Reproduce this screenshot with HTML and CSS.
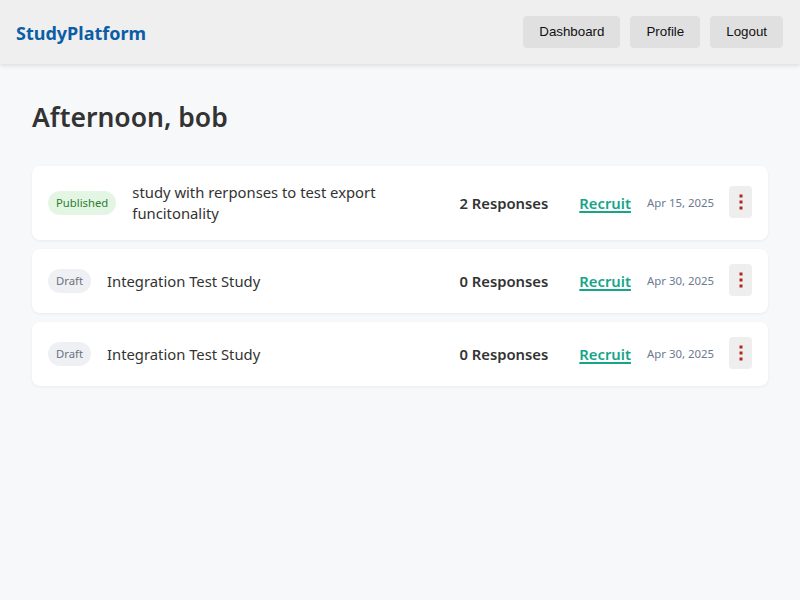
FILE: index.html
```html
<!DOCTYPE html>
<html lang="en">
<head>
<meta charset="utf-8">
<title>StudyPlatform</title>
<link rel="stylesheet" href="styles.css">
</head>
<body>
<header class="topbar">
  <div class="brand">StudyPlatform</div>
  <nav class="nav">
    <button class="nav-btn">Dashboard</button>
    <button class="nav-btn">Profile</button>
    <button class="nav-btn">Logout</button>
  </nav>
</header>
<main class="content">
  <h1 class="greeting">Afternoon, bob</h1>
  <div class="study-list">
    <div class="study-card">
      <span class="badge badge-published">Published</span>
      <div class="study-title">study with rerponses to test export funcitonality</div>
      <div class="responses">2 Responses</div>
      <a class="recruit" href="#">Recruit</a>
      <span class="date">Apr 15, 2025</span>
      <button class="menu-btn" aria-label="More"><svg width="4" height="16" viewBox="0 0 4 16"><rect x="0.5" y="0.5" width="3" height="3" fill="#b3261e"/><rect x="0.5" y="6.5" width="3" height="3" fill="#b3261e"/><rect x="0.5" y="12.5" width="3" height="3" fill="#b3261e"/></svg></button>
    </div>
    <div class="study-card">
      <span class="badge badge-draft">Draft</span>
      <div class="study-title">Integration Test Study</div>
      <div class="responses">0 Responses</div>
      <a class="recruit" href="#">Recruit</a>
      <span class="date">Apr 30, 2025</span>
      <button class="menu-btn" aria-label="More"><svg width="4" height="16" viewBox="0 0 4 16"><rect x="0.5" y="0.5" width="3" height="3" fill="#b3261e"/><rect x="0.5" y="6.5" width="3" height="3" fill="#b3261e"/><rect x="0.5" y="12.5" width="3" height="3" fill="#b3261e"/></svg></button>
    </div>
    <div class="study-card">
      <span class="badge badge-draft">Draft</span>
      <div class="study-title">Integration Test Study</div>
      <div class="responses">0 Responses</div>
      <a class="recruit" href="#">Recruit</a>
      <span class="date">Apr 30, 2025</span>
      <button class="menu-btn" aria-label="More"><svg width="4" height="16" viewBox="0 0 4 16"><rect x="0.5" y="0.5" width="3" height="3" fill="#b3261e"/><rect x="0.5" y="6.5" width="3" height="3" fill="#b3261e"/><rect x="0.5" y="12.5" width="3" height="3" fill="#b3261e"/></svg></button>
    </div>
  </div>
</main>
</body>
</html>
```
FILE: styles.css
```css
* { box-sizing: border-box; }
html, body { margin: 0; padding: 0; }
body {
  background: #f7f8fa;
  font-family: "Noto Sans", "Open Sans", sans-serif;
  color: #333;
  min-height: 600px;
}
.topbar {
  height: 64px;
  background: #efefef;
  display: flex;
  align-items: center;
  justify-content: space-between;
  padding: 0 17px 0 16px;
  box-shadow: 0 2px 4px rgba(0,0,0,0.1);
}
.brand {
  font-size: 18px;
  font-weight: 700;
  color: #0b5ea6;
  margin-top: 2px;
}
.nav { display: flex; gap: 10px; margin-top: -1px; }
.nav-btn {
  font-family: "Liberation Sans", Arial, sans-serif;
  font-size: 13.333px;
  color: #111;
  background: #e0e0e0;
  border: none;
  border-radius: 4px;
  height: 32px;
  padding: 0 16px;
}
.content { padding: 35px 32px 32px; }
.greeting {
  margin: 0 0 30px;
  font-size: 26.5px;
  font-weight: 600;
  color: #333;
  line-height: 1.4;
}
.study-list { display: flex; flex-direction: column; gap: 9px; }
.study-card {
  background: #fff;
  border-radius: 8px;
  box-shadow: 0 1px 3px rgba(0,0,0,0.06);
  display: flex;
  align-items: center;
  padding: 16px;
  min-height: 64px;
}
.badge {
  font-size: 11.3px;
  border-radius: 12px;
  height: 24px;
  line-height: 24px;
  padding: 0 8px;
  flex: none;
}
.badge-published { background: #e3f6e3; color: #2e7d32; }
.badge-draft { background: #eef0f4; color: #6b7280; }
.study-title {
  flex: 1;
  font-size: 14.8px;
  color: #333;
  margin-left: 16px;
  padding-right: 60px;
  line-height: 21px;
}
.responses {
  font-size: 14.8px;
  font-weight: 600;
  color: #333;
  margin-right: 31px;
}
.recruit {
  font-size: 14.8px;
  font-weight: 600;
  color: #16a589;
  text-decoration: underline;
  text-decoration-thickness: 2px;
  text-underline-offset: 2px;
  margin-right: 16px;
}
.date {
  font-size: 11.4px;
  color: #6b7a90;
  margin-right: 15px;
  margin-top: -2px;
}
.menu-btn {
  width: 23px;
  height: 32px;
  border: none;
  border-radius: 4px;
  background: #eee;
  padding: 0;
  display: flex;
  align-items: center;
  justify-content: center;
  margin-top: -3px;
}
```
